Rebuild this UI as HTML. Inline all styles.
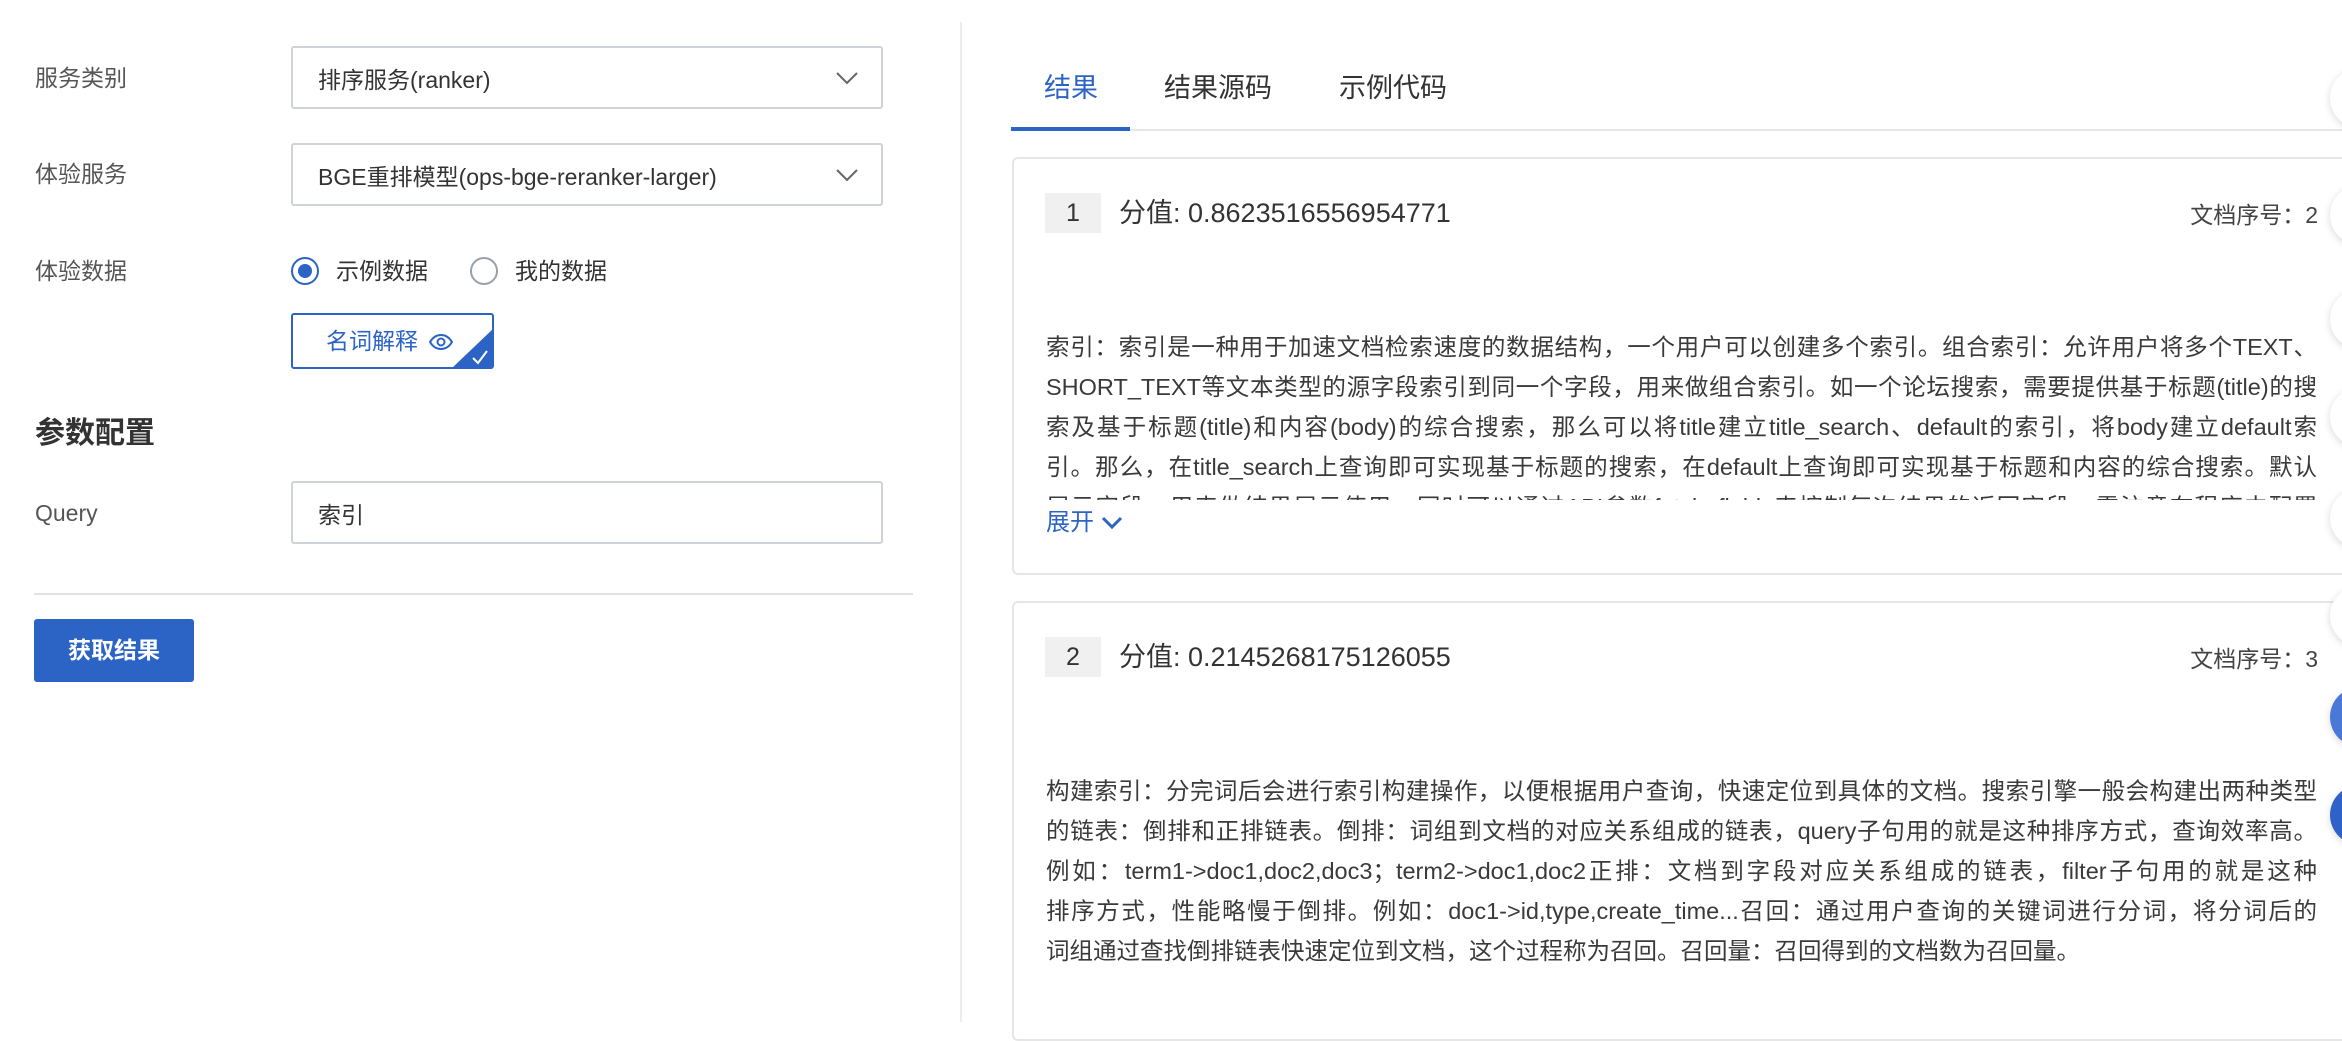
<!DOCTYPE html>
<html><head><meta charset="utf-8">
<style>
*{box-sizing:border-box;margin:0;padding:0}
body{width:2342px;height:1022px;overflow:hidden;background:#fff;font-family:"Liberation Sans","Noto Sans CJK SC",sans-serif;color:#333;position:relative}
.a{position:absolute}
.lbl{font-size:23px;color:#555;line-height:30px}
.sel{border:2px solid #cfd2d6;border-radius:3px;background:#fff;font-size:23px;color:#333;padding-left:25px;display:flex;align-items:center}
.chev{position:absolute;right:22px;top:50%;margin-top:-8px}
.card{border:2px solid #e6e6e6;border-radius:6px;background:#fff}
.idx{background:#f0f0f0;width:56px;height:40px;text-align:center;line-height:40px;font-size:25px;color:#333}
.score{font-size:27px;color:#333;line-height:40px}
.doc{font-size:23px;color:#444;line-height:40px}
.body{font-size:23.5px;color:#3a3a3a;width:1271px;overflow:hidden}
.body div{height:40px;line-height:40px;text-align:justify;text-align-last:justify;white-space:nowrap}
.body div.last{text-align-last:left}
.circ{position:absolute;left:2330px;width:60px;height:60px;border-radius:50%;background:#fff;box-shadow:0 2px 8px rgba(0,0,0,.15)}
</style></head><body>

<!-- left panel -->
<div class="a lbl" style="left:35px;top:63px">服务类别</div>
<div class="a sel" style="left:291px;top:46px;width:592px;height:63px">排序服务(ranker)
<svg class="chev" width="24" height="16" viewBox="0 0 24 16"><path d="M2 3l10 10L22 3" fill="none" stroke="#666" stroke-width="2"/></svg></div>

<div class="a lbl" style="left:35px;top:159px">体验服务</div>
<div class="a sel" style="left:291px;top:143px;width:592px;height:63px">BGE重排模型(ops-bge-reranker-larger)
<svg class="chev" width="24" height="16" viewBox="0 0 24 16"><path d="M2 3l10 10L22 3" fill="none" stroke="#666" stroke-width="2"/></svg></div>

<div class="a lbl" style="left:35px;top:256px">体验数据</div>
<div class="a" style="left:291px;top:257px;width:28px;height:28px;border:2px solid #2c64c6;border-radius:50%"><div style="margin:5px;width:14px;height:14px;border-radius:50%;background:#2c64c6"></div></div>
<div class="a lbl" style="left:336px;top:256px;color:#333">示例数据</div>
<div class="a" style="left:470px;top:257px;width:28px;height:28px;border:2px solid #9aa0a8;border-radius:50%"></div>
<div class="a lbl" style="left:515px;top:256px;color:#333">我的数据</div>

<div class="a" style="left:291px;top:313px;width:203px;height:56px;border:2px solid #2c64c6;border-radius:3px;overflow:hidden;background:#fff">
  <div class="a" style="left:33px;top:11px;font-size:23px;color:#2c64c6;line-height:30px">名词解释</div>
  <svg class="a" style="left:135px;top:14px" width="26" height="26" viewBox="0 0 26 26"><path d="M2 13c3-5 7-7 11-7s8 2 11 7c-3 5-7 7-11 7s-8-2-11-7z" fill="none" stroke="#2c64c6" stroke-width="2"/><circle cx="13" cy="13" r="3.5" fill="none" stroke="#2c64c6" stroke-width="2"/></svg>
  <svg class="a" style="left:158px;top:13px" width="43" height="41" viewBox="0 0 43 41"><path d="M43 0V41H0z" fill="#2c64c6"/><path d="M22 30l5 5 9-12" fill="none" stroke="#fff" stroke-width="2"/></svg>
</div>

<div class="a" style="left:35px;top:416px;font-size:30px;font-weight:bold;color:#333;line-height:36px">参数配置</div>
<div class="a lbl" style="left:35px;top:498px">Query</div>
<div class="a sel" style="left:291px;top:481px;width:592px;height:63px">索引</div>
<div class="a" style="left:34px;top:593px;width:879px;height:2px;background:#e3e3e3"></div>
<div class="a" style="left:34px;top:619px;width:160px;height:63px;background:#2c64c6;border-radius:3px;color:#fff;font-size:23px;font-weight:bold;text-align:center;line-height:63px">获取结果</div>

<div class="a" style="left:960px;top:22px;width:2px;height:1000px;background:#ececec"></div>

<!-- right panel -->
<div class="a" style="left:1044px;top:71px;font-size:27px;color:#2c64c6;line-height:34px">结果</div>
<div class="a" style="left:1164px;top:71px;font-size:27px;color:#333;line-height:34px">结果源码</div>
<div class="a" style="left:1339px;top:71px;font-size:27px;color:#333;line-height:34px">示例代码</div>
<div class="a" style="left:1011px;top:129px;width:1331px;height:2px;background:#e6e6e6"></div>
<div class="a" style="left:1011px;top:127px;width:119px;height:4px;background:#2c64c6"></div>

<div class="a card" style="left:1012px;top:157px;width:1345px;height:418px"></div>
<div class="a idx" style="left:1045px;top:193px">1</div>
<div class="a score" style="left:1119px;top:193px">分值: 0.8623516556954771</div>
<div class="a doc" style="left:2100px;top:195px;width:218px;text-align:right">文档序号：2</div>
<div class="a body" style="left:1046px;top:327px;height:173px">
<div>索引：索引是一种用于加速文档检索速度的数据结构，一个用户可以创建多个索引。组合索引：允许用户将多个TEXT、</div>
<div>SHORT_TEXT等文本类型的源字段索引到同一个字段，用来做组合索引。如一个论坛搜索，需要提供基于标题(title)的搜</div>
<div>索及基于标题(title)和内容(body)的综合搜索，那么可以将title建立title_search、default的索引，将body建立default索</div>
<div>引。那么，在title_search上查询即可实现基于标题的搜索，在default上查询即可实现基于标题和内容的综合搜索。默认</div>
<div>展示字段：用来做结果展示使用，同时可以通过API参数fetch_fields来控制每次结果的返回字段，需注意在程序中配置</div>
</div>
<div class="a" style="left:1046px;top:507px;font-size:24px;color:#2c64c6;line-height:32px">展开</div>
<svg class="a" style="left:1100px;top:515px" width="24" height="16" viewBox="0 0 24 16"><path d="M3 3l9 9 9-9" fill="none" stroke="#2c64c6" stroke-width="3"/></svg>

<div class="a card" style="left:1012px;top:601px;width:1345px;height:440px"></div>
<div class="a idx" style="left:1045px;top:637px">2</div>
<div class="a score" style="left:1119px;top:637px">分值: 0.2145268175126055</div>
<div class="a doc" style="left:2100px;top:639px;width:218px;text-align:right">文档序号：3</div>
<div class="a body" style="left:1046px;top:771px;height:200px">
<div>构建索引：分完词后会进行索引构建操作，以便根据用户查询，快速定位到具体的文档。搜索引擎一般会构建出两种类型</div>
<div>的链表：倒排和正排链表。倒排：词组到文档的对应关系组成的链表，query子句用的就是这种排序方式，查询效率高。</div>
<div>例如：term1-&gt;doc1,doc2,doc3；term2-&gt;doc1,doc2正排：文档到字段对应关系组成的链表，filter子句用的就是这种</div>
<div>排序方式，性能略慢于倒排。例如：doc1-&gt;id,type,create_time...召回：通过用户查询的关键词进行分词，将分词后的</div>
<div class="last">词组通过查找倒排链表快速定位到文档，这个过程称为召回。召回量：召回得到的文档数为召回量。</div>
</div>

<div class="circ" style="top:68px"></div>
<div class="circ" style="top:185px"></div>
<div class="circ" style="top:289px"></div>
<div class="circ" style="top:387px"></div>
<div class="circ" style="top:488px"></div>
<div class="circ" style="top:586px"></div>
<div class="circ" style="top:687px;background:#4a78d6"></div>
<div class="circ" style="top:785px;background:#2f62c8"></div>
</body></html>
